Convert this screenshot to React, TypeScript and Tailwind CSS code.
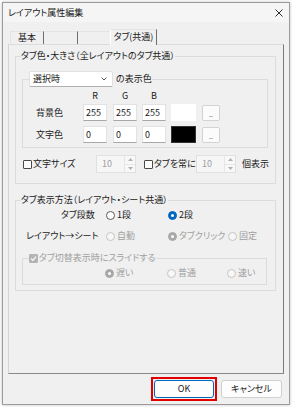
import React from "react";

type RadioProps = { label: string; checked?: boolean; disabled?: boolean };

function Radio({ label, checked, disabled }: RadioProps) {
  const ring = checked
    ? disabled
      ? "border-[#a8a8a8] bg-[#a8a8a8]"
      : "border-[#0067c0] bg-[#0067c0]"
    : disabled
      ? "border-[#c4c4c4] bg-[#f7f7f7]"
      : "border-[#5a5a5a] bg-white";
  return (
    <span className="flex items-center gap-[2px]">
      <span className={`flex h-[9px] w-[9px] items-center justify-center rounded-full border ${ring}`}>
        {checked ? <span className="h-[3px] w-[3px] rounded-full bg-white" /> : null}
      </span>
      <span className={disabled ? "text-[#a0a0a0]" : ""}>{label}</span>
    </span>
  );
}

function CheckBox({ label, checked, disabled }: RadioProps) {
  return (
    <span className="flex items-center gap-px">
      <span
        className={`flex h-[9px] w-[9px] items-center justify-center rounded-[1px] border ${
          checked ? "border-[#b4b4b4] bg-[#b4b4b4]" : "border-[#4a4a4a] bg-white"
        }`}
      >
        {checked ? (
          <svg width="7" height="7" viewBox="0 0 7 7" fill="none">
            <path d="M1 3.6 L2.8 5.3 L6 1.6" stroke="white" strokeWidth="1.2" />
          </svg>
        ) : null}
      </span>
      <span className={disabled ? "text-[#a0a0a0]" : ""}>{label}</span>
    </span>
  );
}

function NumBox({ value }: { value: string }) {
  return (
    <div className="flex h-[17px] w-[24px] items-center border border-[#e2e2e2] border-b-[#a8a8a8] bg-white pl-[2px]">
      {value}
    </div>
  );
}

function DotsButton() {
  return (
    <div className="flex h-[16px] w-[18px] items-end justify-center rounded-[2px] border border-[#d3d3d3] bg-[#fbfbfb] pb-[2px] text-[7px] leading-none text-[#555]">
      ..
    </div>
  );
}

function Spin({ value }: { value: string }) {
  return (
    <div className="flex h-[18px] w-[40px] border border-[#e0e0e0] bg-[#f6f6f6]">
      <div className="flex flex-1 items-center pl-[5px] text-[#a0a0a0]">{value}</div>
      <div className="flex w-[11px] flex-col border-l border-[#e6e6e6] bg-[#f8f8f8]">
        <div className="flex flex-1 items-center justify-center border-b border-[#e6e6e6]">
          <svg width="5" height="3" viewBox="0 0 5 3">
            <path d="M0 3 L2.5 0 L5 3 Z" fill="#b0b0b0" />
          </svg>
        </div>
        <div className="flex flex-1 items-center justify-center">
          <svg width="5" height="3" viewBox="0 0 5 3">
            <path d="M0 0 L2.5 3 L5 0 Z" fill="#b0b0b0" />
          </svg>
        </div>
      </div>
    </div>
  );
}

export default function App() {
  return (
    <div className="h-[407px] w-[292px] bg-white pl-[2px] pt-[2px] font-['Noto_Sans_CJK_JP','Noto_Sans',sans-serif] text-[9px] leading-[14px] text-[#1a1a1a] [font-feature-settings:'palt']">
      <div className="flex h-[403px] w-[288px] flex-col border border-[#9c9c9c] bg-[#f0f0f0] shadow-[0_0_3px_rgba(0,0,0,0.25)]">
        {/* title bar */}
        <div className="flex h-[19px] items-center justify-between bg-[#f5f5f5] pl-[5px] pr-[6px]">
          <span>レイアウト属性編集</span>
          <svg width="8" height="8" viewBox="0 0 8 8">
            <path d="M0.5 0.5 L7.5 7.5 M7.5 0.5 L0.5 7.5" stroke="#333" strokeWidth="1" />
          </svg>
        </div>

        {/* tabs */}
        <div className="relative z-10 -mb-px mt-[7px] flex h-[16px] items-end pl-[7px]">
          <div className="mb-px flex h-[13px] w-[34px] items-center justify-center border-l border-t border-r border-l-[#e4e4e4] border-t-[#e4e4e4] border-r-[#6e6e6e]">
            基本
          </div>
          <div className="mb-px h-[13px] w-[34px] border-t border-r border-t-[#e4e4e4] border-r-[#6e6e6e]" />
          <div className="mb-px h-[13px] w-[32px] border-t border-t-[#e4e4e4]" />
          <div className="flex h-[16px] w-[47px] items-center justify-center border-l border-t border-r border-l-white border-t-[#e4e4e4] border-r-[#6e6e6e] bg-[#f0f0f0] pb-px">
            タブ(共通)
          </div>
        </div>

        {/* tab panel */}
        <div className="ml-[5px] h-[330px] w-[276px] border border-l-[#d4d4d4] border-t-[#dcdcdc] border-r-[#7a7a7a] border-b-[#8a8a8a] bg-[#f0f0f0]">
          <fieldset className="ml-[6px] mt-[4px] w-[261px] border border-[#dcdcdc] pb-[10px]">
            <legend className="ml-[5px]">タブ色・大きさ（全レイアウトのタブ共通）</legend>

            <fieldset className="ml-[6px] mt-[8px] w-[246px] border border-[#dcdcdc] pb-[4px]">
              <legend className="ml-[6px] flex h-[16px] items-center">
                <div className="flex h-[16px] w-[84px] items-center justify-between rounded-[2px] border border-[#e0e0e0] border-b-[#b0b0b0] bg-white pl-[3px] pr-[5px]">
                  <span>選択時</span>
                  <svg width="6" height="4" viewBox="0 0 6 4" fill="none">
                    <path d="M0.5 0.5 L3 3 L5.5 0.5" stroke="#444" strokeWidth="0.9" />
                  </svg>
                </div>
                <span className="ml-[3px]">の表示色</span>
              </legend>

              <div className="mt-[2px] flex h-[14px] items-center pl-[60px]">
                <span className="w-[24px] text-center">R</span>
                <span className="ml-[6px] w-[24px] text-center">G</span>
                <span className="ml-[5px] w-[24px] text-center">B</span>
              </div>

              <div className="mt-px flex h-[17px] items-center pl-[13px]">
                <span className="w-[47px]">背景色</span>
                <NumBox value="255" />
                <div className="ml-[6px]"><NumBox value="255" /></div>
                <div className="ml-[5px]"><NumBox value="255" /></div>
                <div className="ml-[5px] h-[17px] w-[25px] bg-white" />
                <div className="ml-[6px]"><DotsButton /></div>
              </div>

              <div className="mt-[5px] flex h-[17px] items-center pl-[13px]">
                <span className="w-[47px]">文字色</span>
                <NumBox value="0" />
                <div className="ml-[6px]"><NumBox value="0" /></div>
                <div className="ml-[5px]"><NumBox value="0" /></div>
                <div className="ml-[5px] h-[17px] w-[25px] border border-[#333] bg-black" />
                <div className="ml-[6px]"><DotsButton /></div>
              </div>
            </fieldset>

            <div className="mt-[7px] flex h-[18px] items-center pl-[7px]">
              <div className="w-[73px]"><CheckBox label="文字サイズ" /></div>
              <Spin value="10" />
              <div className="ml-[8px] w-[52px]"><CheckBox label="タブを常に" /></div>
              <Spin value="10" />
              <span className="ml-[6px]">個表示</span>
            </div>
          </fieldset>

          <fieldset className="ml-[6px] mt-[9px] w-[261px] border border-[#dcdcdc] pb-[5px]">
            <legend className="ml-[5px]">タブ表示方法（レイアウト・シート共通）</legend>

            <div className="mt-px flex h-[14px] items-center">
              <span className="w-[90px] pl-[45px]">タブ段数</span>
              <div className="w-[62px]"><Radio label="1段" /></div>
              <Radio label="2段" checked />
            </div>

            <div className="mt-[7px] flex h-[14px] items-center">
              <span className="w-[90px] pl-[10px]">レイアウト→シート</span>
              <div className="w-[62px]"><Radio label="自動" disabled /></div>
              <div className="w-[60px]"><Radio label="タブクリック" checked disabled /></div>
              <Radio label="固定" disabled />
            </div>

            <fieldset className="ml-[6px] mt-[8px] w-[245px] border border-[#dcdcdc] pb-[4px]">
              <legend className="ml-[6px]">
                <CheckBox label="タブ切替表示時にスライドする" checked disabled />
              </legend>
              <div className="mt-px flex h-[14px] items-center pl-[82px]">
                <div className="w-[62px]"><Radio label="遅い" checked disabled /></div>
                <div className="w-[60px]"><Radio label="普通" disabled /></div>
                <Radio label="速い" disabled />
              </div>
            </fieldset>
          </fieldset>
        </div>

        {/* buttons */}
        <div className="mt-[3px] flex items-center justify-end gap-[4px] pr-[7px]">
          <div className="border-2 border-[#e00000] p-px">
            <button
              type="button"
              className="flex h-[18px] w-[60px] items-center justify-center rounded-[3px] border border-[#0067c0] bg-[#fdfdfd]"
            >
              OK
            </button>
          </div>
          <button
            type="button"
            className="flex h-[18px] w-[61px] items-center justify-center rounded-[3px] border border-[#d0d0d0] bg-[#fdfdfd]"
          >
            キャンセル
          </button>
        </div>
      </div>
    </div>
  );
}
